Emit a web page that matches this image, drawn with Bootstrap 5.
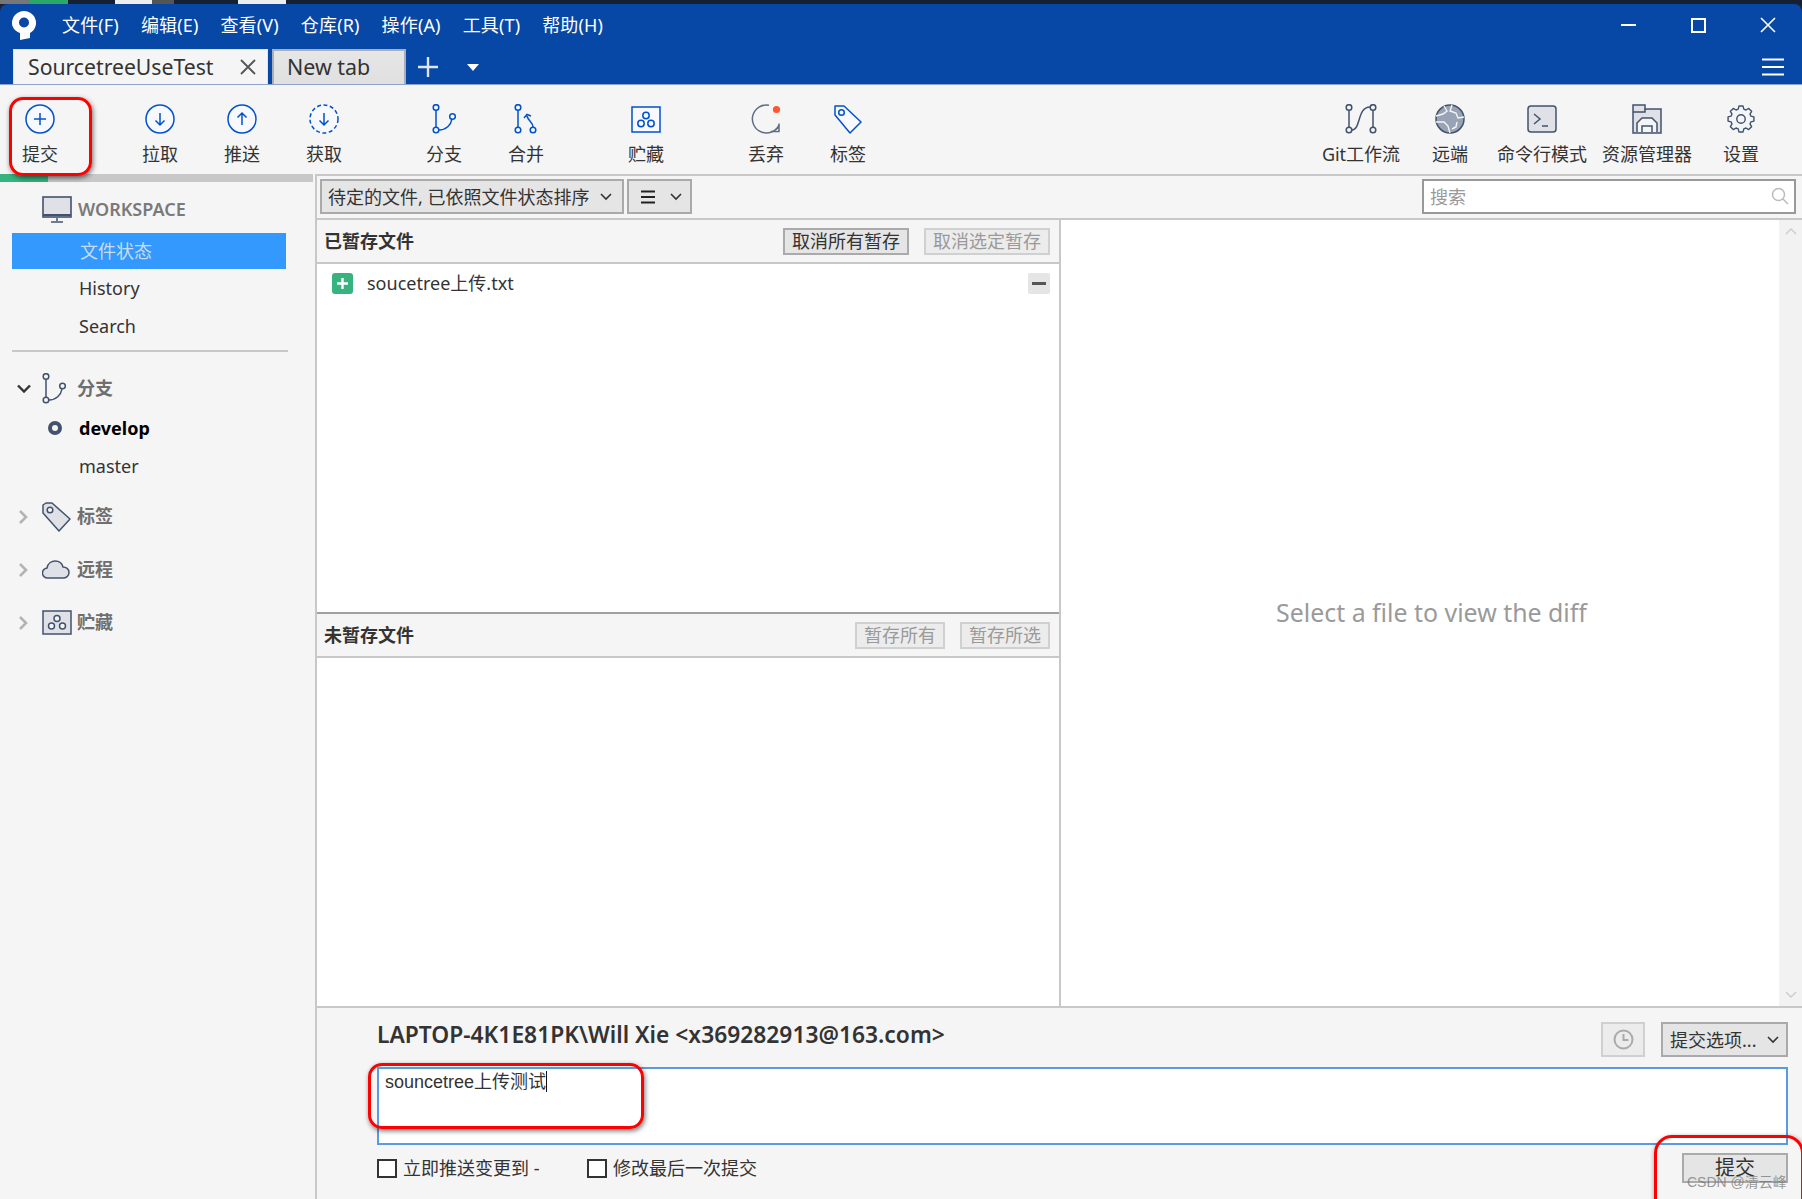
<!DOCTYPE html>
<html lang="zh">
<head>
<meta charset="utf-8">
<title>Sourcetree</title>
<link href="https://cdn.jsdelivr.net/npm/bootstrap@5.3.0/dist/css/bootstrap.min.css" rel="stylesheet">
<style>
html,body{height:100%;margin:0;overflow:hidden;background:#1a2233}
body{font-family:"Noto Sans","Noto Sans CJK SC",sans-serif;font-size:18px;color:#333}
.app{height:1199px;width:1802px;position:relative;overflow:hidden}
.strip{height:4px;flex:none;background:#162033}
.strip i{display:block;height:4px}
.s1{width:30px;background:#777}.s2{width:38px;background:#2aa865}.s3{width:47px;background:#162033}.s4{width:37px;background:#eee}.s5{width:22px;background:#555}.s7{width:64px;background:#162033}
.s8{width:48px;background:#eee}
.blue{background:#0747a6;border-radius:8px 8px 0 0;flex:none}
.menurow{height:46px;padding:0 0 4px 12px}
.appmenu{margin-left:26px;gap:22px;color:#fff;line-height:1}
.appmenu .nav-link{padding:0;color:#fff;font-size:18px;letter-spacing:.15px}
.winmin{width:15px;height:2px;background:#fff;margin-right:55px}
.winmax{width:15px;height:15px;border:2px solid #fff;margin-right:54px}
.winclose{margin-right:26px;display:block}
.tabrow{height:35px;padding-left:13px;border-bottom:1px solid #8ea4c8}
.tabon{width:255px;height:35px;background:#f5f5f5;padding:0 11px 0 14px;font-size:21.2px;color:#333;border:1px solid #dfe3ea;border-bottom:0}
.taboff{width:134px;height:35px;margin-left:4px;padding-left:13px;font-size:21.4px;color:#333;background:linear-gradient(#e6e6e6,#e0e0e0);border:2px solid #a9aeb8;border-bottom:0}
.tabplus{margin-left:12px;display:block}
.tabcaret{margin-left:29px;width:0;height:0;border:6px solid transparent;border-top:7px solid #fff;border-bottom:0}
.tabham{margin-left:auto;margin-right:18px;display:block}
.tools{height:89px;background:#f5f5f5;flex:none}
.tool{width:82px;height:89px;flex:none;padding-top:19px;color:#333;font-size:18px;line-height:1;white-space:nowrap}
.tool svg{display:block;height:30px;margin-bottom:11px}
.tool.first{width:80px}
.gapl{margin-left:38px}
.gapf{margin-left:39px}
.w88{width:88px}.w90{width:90px}.w94{width:94px}.w116{width:116px}.w72{width:72px}
.rtools{margin-left:auto;margin-right:25px}
.mainrow{height:1025px;flex:none;background:#f5f5f5}
.side{width:317px;flex:none;border-right:2px solid #c8c8c8;height:1025px}
.prog{height:8px;width:313px;background:#c8c8c8}
.prog div{height:8px;width:48px;background:#36b37e}
.wsrow{height:51px;padding-left:42px;padding-top:3px;color:#7a7a7a;font-weight:600;font-size:18px;gap:6px}
.sel.nav-link{height:36px;margin-left:12px;width:274px;background:#3399ff;color:#c9dcee;padding:0 0 0 68px;font-size:18px;line-height:36px}
.sitem{height:38px;line-height:38px;margin-left:79px;color:#333;font-size:18px;padding:0}
.sitem.nav-link{color:#333;padding:0}
.siderule{height:2px;width:276px;margin:5px 0 16px 12px;background:#c8c8c8}
.treehead{height:41px;color:#6f6f6f;font-weight:700;font-size:18px}
.chev{width:42px;flex:none;padding-left:17px}
.chev svg{display:block}
.treeicon{width:35px;flex:none}
.treeicon svg{display:block}
.branchrow{height:38px;line-height:38px;padding-left:79px;position:relative;color:#333}
.curdot{position:absolute;left:48px;top:12px;width:14px;height:14px;border:4px solid #42526e;border-radius:50%}
.spaced{margin-top:12px}
.first-tag{margin-top:11px}
.rightcol{min-width:0}
.filter{border-top:2px solid #c8c8c8;border-bottom:2px solid #c8c8c8;padding:3px 6px 0 3px;flex:none;box-sizing:content-box;height:39px}
.wbtn.btn{border-radius:0;border:2px solid #aaa;background:#e5e5e5;color:#333;padding:0 8px;font-size:18px;line-height:1;display:inline-flex;align-items:center;white-space:nowrap;--bs-btn-hover-bg:#e5e5e5}
.sortbtn.btn{width:304px;height:35px;justify-content:space-between;padding:0 10px 0 6px}
.listbtn.btn{width:65px;height:35px;margin-left:3px;justify-content:space-between;padding:0 8px 0 12px}
.srch{width:374px;height:35px;margin-left:auto;position:relative}
.srch .form-control{height:35px;border-radius:0;border:2px solid #999;font-size:18px;padding:0 6px;color:#999;box-shadow:none}
.srch .form-control::placeholder{color:#999}
.srch svg{position:absolute;right:7px;top:8px}
.panes{height:786px;flex:none}
.leftpane{width:744px;flex:none;border-right:2px solid #c8c8c8}
.stagedbox{height:392px;flex:none;background:#fff}
.phead{height:44px;background:#f5f5f5;border-bottom:2px solid #c8c8c8;padding:0 9px 0 7px;flex:none}
.ptitle{font-weight:700;font-size:18px;color:#333}
.smallbtn.btn{height:27px;padding:0 7px;font-size:18px;margin-left:15px;justify-content:center}
.smallbtn.dim{border-color:#d0d0d0;color:#9a9a9a;background:#ececec;opacity:1}
.fileitem.list-group-item{border:0;background:transparent;padding:0 9px 0 15px;height:36px;font-size:18px;color:#333;margin-top:1px}
.plusbox{width:21px;height:21px;border-radius:3px;background:#36b37e;flex:none;margin-right:14px;display:flex;align-items:center;justify-content:center}
.minusbtn{margin-left:auto;width:22px;height:21px;background:#e5e5e5;border-radius:2px;display:flex;align-items:center;justify-content:center}
.minusbtn i{display:block;width:14px;height:3px;background:#555}
.unstaged{border-top:2px solid #a0a0a0;background:#fff;min-height:0}
.diff{background:#fff;min-width:0;position:relative}
.difftext{font-size:24.9px;color:#9a9a9a;padding-left:23px;padding-bottom:1px}
.sbar{width:23px;flex:none;background:#f2f2f2;padding:8px 0}
.commit{height:193px;border-top:2px solid #c8c8c8;margin-left:-2px;background:#f5f5f5;padding:14px 14px 0 60px;flex:none;border-left:2px solid #c8c8c8}
.crow{height:35px}
.author{font-size:22.8px;font-weight:600;color:#333;line-height:1;margin-top:-8px;white-space:nowrap}
.clock.btn{width:44px;height:35px;margin-left:auto;border-color:#d0d0d0;background:#ececec;justify-content:center;padding:0}
.copts.btn{width:127px;height:35px;margin-left:16px;justify-content:space-between;padding:0 7px}
.msg{height:78px;margin-top:10px;border:2px solid #5a9be0;border-radius:0;font-family:"Liberation Sans","Noto Sans CJK SC",sans-serif;font-size:18px;line-height:1.2;padding:2px 6px;color:#333;background:#fff}
.caret{display:inline-block;width:1px;height:21px;background:#111;vertical-align:-4px}
.brow{height:30px;margin-top:8px}
.chk{width:20px;height:19px;border:2px solid #333;background:#fff;flex:none;margin:0 6px 0 0;border-radius:0;appearance:none;display:block}
.chklabel{font-size:18px;color:#333;white-space:nowrap;margin-right:0}
.chkwrap{width:210px;line-height:1}
.docommit.btn{width:106px;height:30px;margin-left:auto;font-size:20px;justify-content:center}
.redbox{position:absolute;border:3px solid #f00;border-radius:14px;box-shadow:1px 2px 5px rgba(0,0,0,.55);pointer-events:none}
.r1{left:9px;top:97px;width:83px;height:79px}
.r2{left:368px;top:1063px;width:276px;height:66px}
.r3{left:1654px;top:1135px;width:150px;height:90px;border-radius:18px}
.wmark{position:absolute;left:1687px;top:1173px;font-size:14px;line-height:1.3;color:rgba(110,110,110,.7);font-family:"Liberation Sans","Noto Sans CJK SC",sans-serif;white-space:nowrap}
</style>
</head>
<body>
<div class="app d-flex flex-column">
  <div class="strip d-flex"><i class="s1"></i><i class="s2"></i><i class="s3"></i><i class="s4"></i><i class="s5"></i><i class="s7"></i><i class="s8"></i></div>

  <div class="blue">
    <div class="menurow d-flex align-items-center">
      <svg width="24" height="29" viewBox="0 0 24 29"><path fill="#fff" d="M12 0a12 12 0 0 1 12 12c0 4.500-2.500 8-6 10v5l-10 2v-7C3 20 0 16.500 0 12A12 12 0 0 1 12 0z"/><circle cx="12" cy="11.500" r="5" fill="#0747a6"/></svg>
      <nav class="nav appmenu">
        <a class="nav-link" href="#">文件(F)</a>
        <a class="nav-link" href="#">编辑(E)</a>
        <a class="nav-link" href="#">查看(V)</a>
        <a class="nav-link" href="#">仓库(R)</a>
        <a class="nav-link" href="#">操作(A)</a>
        <a class="nav-link" href="#">工具(T)</a>
        <a class="nav-link" href="#">帮助(H)</a>
      </nav>
      <div class="d-flex align-items-center ms-auto">
        <div class="winmin"></div>
        <div class="winmax"></div>
        <svg class="winclose" width="16" height="16" viewBox="0 0 16 16"><path d="M1 1l14 14M15 1L1 15" stroke="#fff" stroke-width="1.6" fill="none"/></svg>
      </div>
    </div>
    <div class="tabrow d-flex align-items-end">
      <div class="tabon d-flex align-items-center justify-content-between"><span>SourcetreeUseTest</span>
        <svg width="16" height="16" viewBox="0 0 16 16"><path d="M1 1l14 14M15 1L1 15" stroke="#555" stroke-width="1.8" fill="none"/></svg></div>
      <div class="taboff d-flex align-items-center">New tab</div>
      <svg class="tabplus align-self-center" width="20" height="20" viewBox="0 0 20 20"><path d="M10 0v20M0 10h20" stroke="#dfe6f2" stroke-width="2.4"/></svg>
      <div class="tabcaret align-self-center"></div>
      <svg class="tabham align-self-center" width="22" height="18" viewBox="0 0 22 18"><path d="M0 1.500h22M0 9h22M0 16.500h22" stroke="#fff" stroke-width="1.800"/></svg>
    </div>
  </div>

  <div class="tools d-flex">
    <div class="tool first d-flex flex-column align-items-center"><svg width="30" viewBox="0 0 30 30"><circle cx="15" cy="15" r="14" fill="#f7f9ff" stroke="#0052cc" stroke-width="1.500"/><path d="M15 9v12M9 15h12" stroke="#0052cc" stroke-width="1.500"/></svg>提交</div>
    <div class="tool gapf d-flex flex-column align-items-center"><svg width="30" viewBox="0 0 30 30"><circle cx="15" cy="15" r="14" fill="#f7f9ff" stroke="#0052cc" stroke-width="1.500"/><path d="M15 9v12M10.500 16.500L15 21l4.500-4.500" stroke="#0052cc" stroke-width="1.500" fill="none"/></svg>拉取</div>
    <div class="tool d-flex flex-column align-items-center"><svg width="30" viewBox="0 0 30 30"><circle cx="15" cy="15" r="14" fill="#f7f9ff" stroke="#0052cc" stroke-width="1.500"/><path d="M15 21V9M10.500 13.500L15 9l4.500 4.500" stroke="#0052cc" stroke-width="1.500" fill="none"/></svg>推送</div>
    <div class="tool d-flex flex-column align-items-center"><svg width="30" viewBox="0 0 30 30"><circle cx="15" cy="15" r="14" fill="#f7f9ff" stroke="#0052cc" stroke-width="1.500" stroke-dasharray="4 2.500"/><path d="M15 9v12M10.500 16.500L15 21l4.500-4.500" stroke="#0052cc" stroke-width="1.500" fill="none"/></svg>获取</div>
    <div class="tool gapl d-flex flex-column align-items-center"><svg width="24" viewBox="0 0 24 30"><g stroke="#0052cc" stroke-width="1.500" fill="#f7f9ff"><path d="M4 6v18M7 26c7 0 12-5 13-11" fill="none"/><circle cx="4" cy="3.500" r="2.800"/><circle cx="4" cy="26" r="2.800"/><circle cx="20.500" cy="12.500" r="2.800"/></g></svg>分支</div>
    <div class="tool d-flex flex-column align-items-center"><svg width="24" viewBox="0 0 24 30"><g stroke="#0052cc" stroke-width="1.500" fill="#f7f9ff"><path d="M4 6v18M19 23c0-5-5-6-6-11M10 14l3-3.500 4 1.500" fill="none"/><circle cx="4" cy="3.500" r="2.800"/><circle cx="4" cy="26" r="2.800"/><circle cx="19" cy="26" r="2.800"/></g></svg>合并</div>
    <div class="tool gapl d-flex flex-column align-items-center"><svg width="30" viewBox="0 0 30 30"><g stroke="#0052cc" stroke-width="1.500" fill="#f7f9ff"><rect x="1" y="3" width="28" height="25"/><circle cx="15" cy="11.500" r="3.200"/><circle cx="10" cy="19.500" r="3.200"/><circle cx="20" cy="19.500" r="3.200"/></g></svg>贮藏</div>
    <div class="tool gapl d-flex flex-column align-items-center"><svg width="30" viewBox="0 0 30 30"><path d="M18 1.200A14 14 0 1 0 28 21" stroke="#5e6c84" stroke-width="1.500" fill="none"/><path d="M28 19.500v8h-8M28 23l-4 3" stroke="#5e6c84" stroke-width="1.500" fill="none"/><circle cx="25.500" cy="5.500" r="3.600" fill="#ff5630"/></svg>丢弃</div>
    <div class="tool d-flex flex-column align-items-center"><svg width="30" viewBox="0 0 30 30"><g stroke="#0052cc" stroke-width="1.500" fill="#f7f9ff"><path d="M2 2h9l17 16-11 11L2 11z" stroke-linejoin="round"/><circle cx="8.500" cy="8.500" r="2.800"/></g></svg>标签</div>
    <div class="rtools d-flex">
      <div class="tool w88 d-flex flex-column align-items-center"><svg width="32" viewBox="0 0 32 30"><g stroke="#42526e" stroke-width="1.500" fill="#f4f5f7"><path d="M4 6v18M28 6v18M7 26c9 0 5-23 18-23" fill="none"/><circle cx="4" cy="3.500" r="2.800"/><circle cx="4" cy="26" r="2.800"/><circle cx="28" cy="3.500" r="2.800"/><circle cx="28" cy="26" r="2.800"/></g></svg>Git工作流</div>
      <div class="tool w90 d-flex flex-column align-items-center"><svg width="32" viewBox="0 0 32 30"><circle cx="16" cy="15" r="14" fill="#98a3b6" stroke="#42526e" stroke-width="1.500"/><path d="M10 2l3 5-4 3-7 2M18 1l-2 6 6 2 2 5 6-1M2 18l8 0 4 4 2 7M23 18l-1 5-4 2" stroke="#f4f5f7" stroke-width="1.400" fill="none"/></svg>远端</div>
      <div class="tool w94 d-flex flex-column align-items-center"><svg width="30" viewBox="0 0 30 30"><rect x="1" y="2" width="28" height="26" rx="3" fill="#dfe1e6" stroke="#42526e" stroke-width="1.500"/><path d="M7 10l6 5-6 5M15 22h6" stroke="#42526e" stroke-width="1.500" fill="none"/></svg>命令行模式</div>
      <div class="tool w116 d-flex flex-column align-items-center"><svg width="30" viewBox="0 0 30 30"><path d="M1 1h12v4h16v24H1z" fill="#dfe1e6" stroke="#42526e" stroke-width="1.500"/><path d="M13 5v3H1" stroke="#42526e" stroke-width="1.500" fill="none"/><path d="M5 28V19l5-5h10l5 5v9M10 28v-6h10v6" stroke="#42526e" stroke-width="1.500" fill="#f4f5f7"/></svg>资源管理器</div>
      <div class="tool w72 d-flex flex-column align-items-center"><svg width="30" viewBox="0 0 32 32"><path d="M13.800 2.200L18.200 2.200L19 5.400L21.300 6.400L24.200 4.700L27.300 7.800L25.600 10.700L26.600 13L29.800 13.800L29.800 18.200L26.600 19L25.600 21.300L27.300 24.200L24.200 27.300L21.300 25.600L19 26.600L18.200 29.800L13.800 29.800L13 26.600L10.700 25.600L7.800 27.300L4.700 24.200L6.400 21.300L5.400 19L2.200 18.200L2.200 13.800L5.400 13L6.400 10.700L4.700 7.800L7.800 4.700L10.700 6.400L13 5.400Z" fill="#f4f5f7" stroke="#42526e" stroke-width="1.500" stroke-linejoin="round"/><circle cx="16" cy="16" r="4.500" fill="#f4f5f7" stroke="#42526e" stroke-width="1.500"/></svg>设置</div>
    </div>
  </div>

  <div class="mainrow d-flex">
    <aside class="side">
      <div class="prog"><div></div></div>
      <div class="wsrow d-flex align-items-center">
        <svg width="30" height="27" viewBox="0 0 30 27"><rect x="1" y="1" width="28" height="20" fill="#dfe1e6" stroke="#42526e" stroke-width="1.600"/><path d="M1 19h28" stroke="#42526e" stroke-width="2"/><path d="M15 22v3M9 26h12" stroke="#42526e" stroke-width="1.500"/></svg>
        <span>WORKSPACE</span>
      </div>
      <nav class="nav flex-column">
        <a class="nav-link sel" href="#">文件状态</a>
        <a class="nav-link sitem" href="#">History</a>
        <a class="nav-link sitem" href="#">Search</a>
      </nav>
      <div class="siderule"></div>
      <div class="treehead d-flex align-items-center">
        <div class="chev"><svg width="14" height="9" viewBox="0 0 14 9"><path d="M1 1.500l6 6 6-6" stroke="#333" stroke-width="2.400" fill="none"/></svg></div>
        <div class="treeicon"><svg width="24" height="31" viewBox="0 0 24 31"><g stroke="#42526e" stroke-width="1.500" fill="#f4f5f7"><path d="M4 6v19M7 27c7 0 12-5 13-11" fill="none"/><circle cx="4" cy="3.500" r="2.800"/><circle cx="4" cy="27" r="2.800"/><circle cx="20.500" cy="13" r="2.800"/></g></svg></div>
        <span>分支</span>
      </div>
      <div class="branchrow fw-bold text-black"><span class="curdot"></span>develop</div>
      <div class="branchrow">master</div>
      <div class="treehead first-tag d-flex align-items-center">
        <div class="chev"><svg width="12" height="14" viewBox="0 0 12 14"><path d="M3 1l6 6-6 6" stroke="#b3b3b3" stroke-width="2.600" fill="none"/></svg></div>
        <div class="treeicon"><svg width="30" height="30" viewBox="0 0 30 30"><g stroke="#42526e" stroke-width="1.500" fill="#dfe1e6"><path d="M1 3l3-2h6l18 16-11 12L1 11z" stroke-linejoin="round"/><circle cx="8" cy="8" r="2.800" fill="#f4f5f7"/></g></svg></div>
        <span>标签</span>
      </div>
      <div class="treehead spaced d-flex align-items-center">
        <div class="chev"><svg width="12" height="14" viewBox="0 0 12 14"><path d="M3 1l6 6-6 6" stroke="#b3b3b3" stroke-width="2.600" fill="none"/></svg></div>
        <div class="treeicon"><svg width="28" height="19" viewBox="0 0 28 19"><path d="M6 18a5 5 0 0 1-1-10C6 3 10 1 13 1c4 0 7 2 8 6 3 0 6 2 6 5.500S24 18 21 18z" fill="#dfe1e6" stroke="#42526e" stroke-width="1.500"/></svg></div>
        <span>远程</span>
      </div>
      <div class="treehead spaced d-flex align-items-center">
        <div class="chev"><svg width="12" height="14" viewBox="0 0 12 14"><path d="M3 1l6 6-6 6" stroke="#b3b3b3" stroke-width="2.600" fill="none"/></svg></div>
        <div class="treeicon"><svg width="30" height="25" viewBox="0 0 30 25"><g stroke="#42526e" stroke-width="1.500" fill="#dfe1e6"><rect x="1" y="1" width="28" height="23"/><circle cx="15" cy="8.500" r="3" fill="#f4f5f7"/><circle cx="9.500" cy="16" r="3" fill="#f4f5f7"/><circle cx="20.500" cy="16" r="3" fill="#f4f5f7"/></g></svg></div>
        <span>贮藏</span>
      </div>
    </aside>

    <div class="rightcol flex-grow-1 d-flex flex-column">
      <div class="filter d-flex">
        <button class="btn wbtn sortbtn" type="button"><span>待定的文件, 已依照文件状态排序</span><svg width="12" height="8" viewBox="0 0 12 8"><path d="M1 1l5 5 5-5" stroke="#333" stroke-width="1.600" fill="none"/></svg></button>
        <button class="btn wbtn listbtn" type="button"><svg width="14" height="14" viewBox="0 0 14 14"><path d="M0 1.500h14M0 7h14M0 12.500h14" stroke="#222" stroke-width="1.800"/></svg><svg width="12" height="8" viewBox="0 0 12 8"><path d="M1 1l5 5 5-5" stroke="#333" stroke-width="1.600" fill="none"/></svg></button>
        <div class="srch"><input class="form-control" type="text" placeholder="搜索"><svg width="18" height="18" viewBox="0 0 18 18"><circle cx="7.500" cy="7.500" r="6" stroke="#bbb" stroke-width="1.500" fill="none"/><path d="M12 12l5 5" stroke="#bbb" stroke-width="1.500"/></svg></div>
      </div>
      <div class="panes d-flex">
        <div class="leftpane d-flex flex-column">
          <section class="stagedbox d-flex flex-column">
            <div class="phead d-flex align-items-center">
              <span class="ptitle me-auto">已暂存文件</span>
              <button class="btn wbtn smallbtn" type="button">取消所有暂存</button>
              <button class="btn wbtn smallbtn dim" type="button">取消选定暂存</button>
            </div>
            <ul class="list-group list-group-flush">
              <li class="list-group-item fileitem d-flex align-items-center">
                <span class="plusbox"><svg width="11" height="11" viewBox="0 0 11 11"><path d="M5.500 0v11M0 5.500h11" stroke="#fff" stroke-width="2.400"/></svg></span>
                <span>soucetree上传.txt</span>
                <span class="minusbtn"><i></i></span>
              </li>
            </ul>
          </section>
          <section class="unstaged flex-grow-1 d-flex flex-column">
            <div class="phead d-flex align-items-center">
              <span class="ptitle me-auto">未暂存文件</span>
              <button class="btn wbtn smallbtn dim" type="button">暂存所有</button>
              <button class="btn wbtn smallbtn dim" type="button">暂存所选</button>
            </div>
          </section>
        </div>
        <div class="diff flex-grow-1 d-flex">
          <div class="difftext flex-grow-1 d-flex align-items-center justify-content-center">Select a file to view the diff</div>
          <div class="sbar d-flex flex-column justify-content-between align-items-center">
            <svg width="12" height="7" viewBox="0 0 12 7"><path d="M1 6l5-5 5 5" stroke="#ccc" stroke-width="1.400" fill="none"/></svg>
            <svg width="12" height="7" viewBox="0 0 12 7"><path d="M1 1l5 5 5-5" stroke="#ccc" stroke-width="1.400" fill="none"/></svg>
          </div>
        </div>
      </div>
      <div class="commit">
        <div class="crow d-flex align-items-center">
          <div class="author">LAPTOP-4K1E81PK\Will Xie &lt;x369282913@163.com&gt;</div>
          <button class="btn wbtn clock" type="button"><svg width="21" height="21" viewBox="0 0 21 21"><circle cx="10.500" cy="10.500" r="9" stroke="#aaa" stroke-width="2" fill="none"/><path d="M10.500 5v6h5" stroke="#aaa" stroke-width="2" fill="none"/></svg></button>
          <button class="btn wbtn copts" type="button"><span>提交选项...</span><svg width="12" height="8" viewBox="0 0 12 8"><path d="M1 1l5 5 5-5" stroke="#333" stroke-width="1.600" fill="none"/></svg></button>
        </div>
        <div class="form-control msg">souncetree上传测试<span class="caret"></span></div>
        <div class="brow d-flex align-items-center">
          <label class="chkwrap d-flex align-items-center"><input class="chk" type="checkbox"><span class="chklabel">立即推送变更到 -</span></label>
          <label class="d-flex align-items-center lh-1"><input class="chk" type="checkbox"><span class="chklabel">修改最后一次提交</span></label>
          <button class="btn wbtn docommit" type="button">提交</button>
        </div>
      </div>
    </div>
  </div>

  <div class="redbox r1"></div>
  <div class="redbox r2"></div>
  <div class="redbox r3"></div>
  <div class="wmark">CSDN @清云峰</div>
</div>
<script src="https://cdn.jsdelivr.net/npm/bootstrap@5.3.0/dist/js/bootstrap.bundle.min.js"></script>
</body>
</html>
